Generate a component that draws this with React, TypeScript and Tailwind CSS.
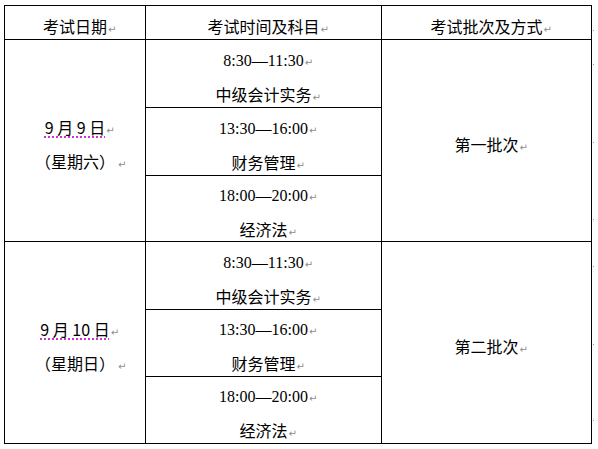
import type { ReactNode } from "react";

const CJK = "font-['Noto_Sans_CJK_SC',sans-serif] pt-[8px]";
const SERIF = "font-['Liberation_Serif','Noto_Sans_CJK_SC',serif] pt-[9px]";

// Word paragraph mark, does not take part in centering
function Mark({ gap = false }: { gap?: boolean }) {
	return (
		<span className="inline-block w-0 overflow-visible whitespace-nowrap align-baseline">
			<span
				className={`${gap ? "ml-[3px]" : "ml-[1px]"} font-['DejaVu_Sans',sans-serif] text-[10px] text-[#8c8c8c]`}
			>
				↵
			</span>
		</span>
	);
}

function Line({
	children,
	serif = false,
	gap = false
}: {
	children: ReactNode;
	serif?: boolean;
	gap?: boolean;
}) {
	return (
		<div
			className={`h-[34px] shrink-0 whitespace-nowrap text-center text-[16px] leading-[24px] text-black ${serif ? SERIF : CJK}`}
		>
			{children}
			<Mark gap={gap} />
		</div>
	);
}

type Slot = { time: string; subject: string; h: string };

function SubRow({ slot, last }: { slot: Slot; last: boolean }) {
	return (
		<div
			className={`flex flex-col justify-center ${slot.h} ${last ? "" : "border-b border-black"}`}
		>
			<Line serif>{slot.time}</Line>
			<Line>{slot.subject}</Line>
		</div>
	);
}

type Day = {
	date: string;
	week: string;
	batch: string;
	h: string;
	border: boolean;
	slots: Slot[];
};

const days: Day[] = [
	{
		date: "9 月 9 日",
		week: "（星期六）",
		batch: "第一批次",
		h: "h-[202px]",
		border: true,
		slots: [
			{ time: "8:30—11:30", subject: "中级会计实务", h: "h-[68px]" },
			{ time: "13:30—16:00", subject: "财务管理", h: "h-[68px]" },
			{ time: "18:00—20:00", subject: "经济法", h: "h-[65px]" }
		]
	},
	{
		date: "9 月 10 日",
		week: "（星期日）",
		batch: "第二批次",
		h: "h-[201px]",
		border: false,
		slots: [
			{ time: "8:30—11:30", subject: "中级会计实务", h: "h-[68px]" },
			{ time: "13:30—16:00", subject: "财务管理", h: "h-[67px]" },
			{ time: "18:00—20:00", subject: "经济法", h: "h-[66px]" }
		]
	}
];

const rowEnds = [24, 58, 136, 213, 260, 338, 414];

export default function App() {
	return (
		<div className="h-[449px] w-[598px] overflow-hidden bg-white pl-[4px] pt-[5px]">
			<div className="relative w-[588px] border border-black">
				<div className="flex h-[34px] border-b border-black">
					<div className="w-[141px] border-r border-black">
						<Line>考试日期</Line>
					</div>
					<div className="w-[236px] border-r border-black">
						<Line>考试时间及科目</Line>
					</div>
					<div className="flex-1">
						<Line>考试批次及方式</Line>
					</div>
				</div>

				{days.map((day) => (
					<div
						key={day.date}
						className={`flex ${day.h} ${day.border ? "border-b border-black" : ""}`}
					>
						<div className="flex w-[141px] flex-col justify-center border-r border-black">
							<Line>
								<span className="underline decoration-[#c000c0] decoration-dotted underline-offset-[3px]">
									{day.date}
								</span>
							</Line>
							<Line gap>{day.week}</Line>
						</div>
						<div className="flex w-[236px] flex-col border-r border-black">
							{day.slots.map((slot, i) => (
								<SubRow
									key={slot.time}
									slot={slot}
									last={i === day.slots.length - 1}
								/>
							))}
						</div>
						<div className="flex flex-1 flex-col justify-center">
							<Line>{day.batch}</Line>
						</div>
					</div>
				))}

				{rowEnds.map((y) => (
					<span
						key={y}
						className="absolute left-[588px] h-[1px] w-[1px] bg-[#9a9a9a]"
						style={{ top: y }}
					/>
				))}
			</div>
		</div>
	);
}
